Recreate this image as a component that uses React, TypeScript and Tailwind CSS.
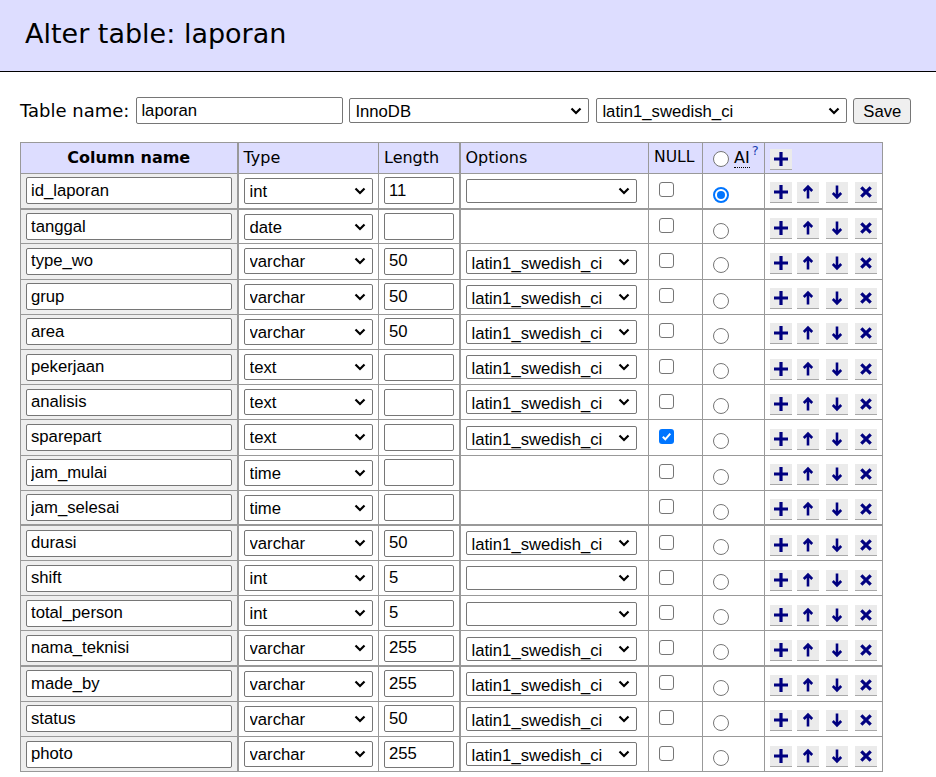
import React from "react";

type Row = {
  name: string;
  type: string;
  len: string;
  opt: string | null;
  nul?: boolean;
  ai?: boolean;
  thick?: boolean;
};

// Column list of the table being altered.
const rows: Row[] = [
  { name: "id_laporan", type: "int", len: "11", opt: "", ai: true },
  { name: "tanggal", type: "date", len: "", opt: null, thick: true },
  { name: "type_wo", type: "varchar", len: "50", opt: "latin1_swedish_ci" },
  { name: "grup", type: "varchar", len: "50", opt: "latin1_swedish_ci" },
  { name: "area", type: "varchar", len: "50", opt: "latin1_swedish_ci" },
  { name: "pekerjaan", type: "text", len: "", opt: "latin1_swedish_ci" },
  { name: "analisis", type: "text", len: "", opt: "latin1_swedish_ci" },
  { name: "sparepart", type: "text", len: "", opt: "latin1_swedish_ci", nul: true },
  { name: "jam_mulai", type: "time", len: "", opt: null },
  { name: "jam_selesai", type: "time", len: "", opt: null },
  { name: "durasi", type: "varchar", len: "50", opt: "latin1_swedish_ci", thick: true },
  { name: "shift", type: "int", len: "5", opt: "" },
  { name: "total_person", type: "int", len: "5", opt: "" },
  { name: "nama_teknisi", type: "varchar", len: "255", opt: "latin1_swedish_ci" },
  { name: "made_by", type: "varchar", len: "255", opt: "latin1_swedish_ci", thick: true },
  { name: "status", type: "varchar", len: "50", opt: "latin1_swedish_ci" },
  { name: "photo", type: "varchar", len: "255", opt: "latin1_swedish_ci" },
];

const NAVY = "#000080";

function Chevron() {
  return (
    <svg
      width="12"
      height="8"
      viewBox="0 0 12 8"
      className="pointer-events-none absolute right-[7px] top-1/2 -translate-y-1/2"
    >
      <path d="M1.5 1.5 6 6l4.5-4.5" fill="none" stroke="#000" strokeWidth="2.2" />
    </svg>
  );
}

function Select({ value, className }: { value: string; className: string }) {
  return (
    <div className={`relative inline-block align-middle ${className}`}>
      <select
        defaultValue={value}
        className="h-full w-full appearance-none rounded-[2px] border border-[#767676] bg-white pl-[5px] pr-6 font-['Liberation_Sans',Arial,sans-serif] text-[16.7px] text-black outline-none"
      >
        <option value={value}>{value}</option>
      </select>
      <Chevron />
    </div>
  );
}

function Input({ value, className }: { value: string; className: string }) {
  return (
    <input
      defaultValue={value}
      className={`rounded-[2px] border border-[#767676] bg-white px-[4px] align-middle font-['Liberation_Sans',Arial,sans-serif] text-[16.7px] text-black outline-none ${className}`}
    />
  );
}

function Check({ on }: { on?: boolean }) {
  if (on)
    return (
      <span className="inline-flex h-[15px] w-[15px] items-center justify-center rounded-[3px] bg-[#0075ff]">
        <svg width="11" height="11" viewBox="0 0 11 11">
          <path d="M1.8 5.8 4.3 8.3 9.3 2.6" fill="none" stroke="#fff" strokeWidth="2" />
        </svg>
      </span>
    );
  return <span className="inline-block h-[15px] w-[15px] rounded-[3px] border border-[#767676] bg-white" />;
}

function Radio({ on }: { on?: boolean }) {
  if (on)
    return (
      <span className="inline-flex h-[16px] w-[16px] items-center justify-center rounded-full border-2 border-[#0075ff] bg-white">
        <span className="h-[8px] w-[8px] rounded-full bg-[#0075ff]" />
      </span>
    );
  return <span className="inline-block h-[16px] w-[16px] rounded-full border border-[#767676] bg-white" />;
}

function Glyph({ kind }: { kind: "plus" | "up" | "down" | "cross" }) {
  return (
    <svg width="22" height="20" viewBox="0 0 22 20">
      {kind === "plus" && (
        <path d="M4 10h14M11 3v14" stroke={NAVY} strokeWidth="3.2" fill="none" />
      )}
      {kind === "up" && (
        <path d="M11 16.5V4.5M6.8 9l4.2-4.3 4.2 4.3" stroke={NAVY} strokeWidth="2.6" fill="none" />
      )}
      {kind === "down" && (
        <path d="M11 3.5v12M6.8 11l4.2 4.3 4.2-4.3" stroke={NAVY} strokeWidth="2.6" fill="none" />
      )}
      {kind === "cross" && (
        <path d="M6.3 5.3l9.4 9.4M15.7 5.3l-9.4 9.4" stroke={NAVY} strokeWidth="3.2" fill="none" />
      )}
    </svg>
  );
}

function IconBtn({ kind, className = "" }: { kind: "plus" | "up" | "down" | "cross"; className?: string }) {
  return (
    <button
      type="button"
      className={`flex h-[21px] w-[22px] items-center justify-center border-b border-[#a8a8a8] bg-[#ebebeb] ${className}`}
    >
      <Glyph kind={kind} />
    </button>
  );
}

export default function App() {
  const td = "border border-[#999] px-[5px] py-0 align-middle";

  return (
    <div className="min-h-screen bg-white font-['DejaVu_Sans',Verdana,sans-serif] text-black">
      <h2 className="flex h-[72px] items-center border-b border-black bg-[#ddf] pb-[3px] pl-[25px] text-[27px] font-normal">
        Alter table: laporan
      </h2>

      <div className="pl-[20px] pt-[25px]">
        {/* Table name, engine, collation */}
        <div className="flex h-[27px] items-center">
          <span className="mr-[7px] text-[18px]">Table name:</span>
          <Input value="laporan" className="h-[27px] w-[207px]" />
          <Select value="InnoDB" className="ml-[6px] h-[25px] w-[240px]" />
          <Select value="latin1_swedish_ci" className="ml-[7px] h-[25px] w-[251px]" />
          <button
            type="button"
            className="ml-[6px] h-[26px] w-[58px] rounded-[3px] border border-[#767676] bg-[#efefef] font-['Liberation_Sans',Arial,sans-serif] text-[16.7px]"
          >
            Save
          </button>
        </div>

        {/* Columns */}
        <table className="mt-[18px] w-[862px] table-fixed border-collapse border border-[#999] text-[16px]">
          <colgroup>
            <col className="w-[217px]" />
            <col className="w-[141px]" />
            <col className="w-[81px]" />
            <col className="w-[189px]" />
            <col className="w-[54px]" />
            <col className="w-[62px]" />
            <col className="w-[118px]" />
          </colgroup>
          <thead>
            <tr className="h-[31px] bg-[#ddf]">
              <th className={`${td} text-center font-bold`}>Column name</th>
              <td className={`${td} border-l-2`}>Type</td>
              <td className={td}>Length</td>
              <td className={`${td} border-l-2`}>Options</td>
              <td className={`${td} text-[15.6px]`}>NULL</td>
              <td className={td}>
                <div className="flex items-center pl-[5px]">
                  <span className="translate-y-[4px]">
                    <Radio />
                  </span>
                  <abbr className="ml-[5px] border-b border-dotted border-black leading-[18px] no-underline">AI</abbr>
                  <sup className="ml-[2px] -translate-y-[1px] text-[13px] text-[#1a3fb0]">?</sup>
                </div>
              </td>
              <td className={td}>
                <IconBtn kind="plus" className="translate-y-[1px]" />
              </td>
            </tr>
          </thead>
          <tbody>
            {rows.map((r) => {
              const t = r.thick ? "border-t-2" : "";
              return (
                <tr key={r.name} className="h-[35.2px]">
                  <th className={`${td} ${t} bg-[#eee] text-left font-normal`}>
                    <Input value={r.name} className="h-[27px] w-[206px]" />
                  </th>
                  <td className={`${td} ${t} border-l-2`}>
                    <Select value={r.type} className="h-[26px] w-[129px]" />
                  </td>
                  <td className={`${td} ${t}`}>
                    <Input value={r.len} className="h-[27px] w-[70px]" />
                  </td>
                  <td className={`${td} ${t} border-l-2`}>
                    {r.opt !== null && <Select value={r.opt} className="h-[24px] w-[171px]" />}
                  </td>
                  <td className={`${td} ${t}`}>
                    <div className="flex -translate-y-[1px] items-center pl-[5px]">
                      <Check on={r.nul} />
                    </div>
                  </td>
                  <td className={`${td} ${t}`}>
                    <div className="flex translate-y-[4px] items-center pl-[5px]">
                      <Radio on={r.ai} />
                    </div>
                  </td>
                  <td className={`${td} ${t}`}>
                    <div className="flex translate-y-[2px] items-center">
                      <IconBtn kind="plus" />
                      <IconBtn kind="up" className="ml-[5px]" />
                      <IconBtn kind="down" className="ml-[7px]" />
                      <IconBtn kind="cross" className="ml-[7px]" />
                    </div>
                  </td>
                </tr>
              );
            })}
          </tbody>
        </table>
      </div>
    </div>
  );
}
